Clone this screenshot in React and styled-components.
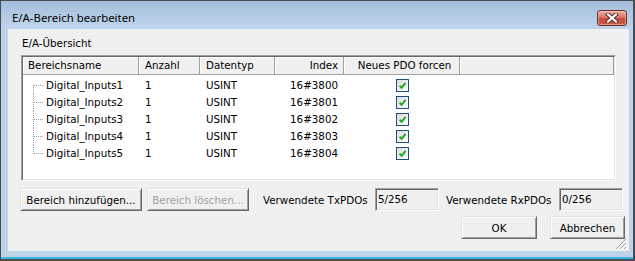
import React from "react";
import styled, { createGlobalStyle } from "styled-components";

const GlobalStyle = createGlobalStyle`
  html, body { margin: 0; padding: 0; background: #ffffff; }
  body { font-family: "DejaVu Sans", Tahoma, sans-serif; }
`;

const FONT = `"DejaVu Sans", Tahoma, sans-serif`;

const rows = [
  { name: "Digital_Inputs1", count: "1", type: "USINT", index: "16#3800" },
  { name: "Digital_Inputs2", count: "1", type: "USINT", index: "16#3801" },
  { name: "Digital_Inputs3", count: "1", type: "USINT", index: "16#3802" },
  { name: "Digital_Inputs4", count: "1", type: "USINT", index: "16#3803" },
  { name: "Digital_Inputs5", count: "1", type: "USINT", index: "16#3804" },
];

const CloseIcon = () => (
  <svg width="14" height="10" viewBox="0 0 14 10">
    <path d="M3 1.5 L11 8.5 M11 1.5 L3 8.5" stroke="#5a2424" strokeWidth="4" strokeLinecap="square" />
    <path d="M3 1.5 L11 8.5 M11 1.5 L3 8.5" stroke="#ffffff" strokeWidth="2.2" strokeLinecap="square" />
  </svg>
);

const CheckIcon = () => (
  <svg width="9" height="9" viewBox="0 0 9 9">
    <path d="M1.6 4.6 L3.6 6.8 L7.6 1.8" fill="none" stroke="#1ea51e" strokeWidth="1.9" />
  </svg>
);

const Grip = () => (
  <svg width="12" height="12" viewBox="0 0 12 12">
    <path d="M11 1 L1 11 M11 5 L5 11 M11 9 L9 11" stroke="#a0a0a0" strokeWidth="1" />
    <path d="M12 2 L2 12 M12 6 L6 12 M12 10 L10 12" stroke="#ffffff" strokeWidth="1" />
  </svg>
);

const App = () => {
  return (
    <>
      <GlobalStyle />
      <Window>
        <TitleBar>
          <Title>E/A-Bereich bearbeiten</Title>
          <CloseButton>
            <CloseIcon />
          </CloseButton>
        </TitleBar>
        <Frame>
          <Client>
            <GroupLabel>E/A-Übersicht</GroupLabel>
            <ListOuter>
              <ListInner>
                <HeaderRow>
                  <HeadCell $first>Bereichsname</HeadCell>
                  <HeadCell>Anzahl</HeadCell>
                  <HeadCell>Datentyp</HeadCell>
                  <HeadCell $align="right">Index</HeadCell>
                  <HeadCell $align="center">Neues PDO forcen</HeadCell>
                  <HeadCell />
                </HeaderRow>
                <Body>
                  {rows.map((r, i) => (
                    <Row key={r.name}>
                      <TreeCell $pos={i === 0 ? "first" : i === rows.length - 1 ? "last" : "mid"}>
                        {r.name}
                      </TreeCell>
                      <Cell>{r.count}</Cell>
                      <Cell>{r.type}</Cell>
                      <Cell $align="right">{r.index}</Cell>
                      <CheckCell>
                        <CheckBox>
                          <CheckIcon />
                        </CheckBox>
                      </CheckCell>
                      <Cell />
                    </Row>
                  ))}
                </Body>
              </ListInner>
            </ListOuter>

            <ActionRow>
              <Button $w={122}>Bereich hinzufügen...</Button>
              <Button $w={102} $ml={5} disabled>
                Bereich löschen...
              </Button>
              <FieldLabel $ml={14} $w={112}>Verwendete TxPDOs</FieldLabel>
              <ReadOnlyField>5/256</ReadOnlyField>
              <FieldLabel $ml={7} $w={113}>Verwendete RxPDOs</FieldLabel>
              <ReadOnlyField>0/256</ReadOnlyField>
            </ActionRow>

            <DialogButtons>
              <Button $w={76}>OK</Button>
              <Button $w={75} $ml={13}>Abbrechen</Button>
            </DialogButtons>

            <GripBox>
              <Grip />
            </GripBox>
          </Client>
        </Frame>
      </Window>
    </>
  );
};

export default App;

const Window = styled.div`
  width: 635px;
  height: 261px;
  box-sizing: border-box;
  border: 1px solid #474c53;
  border-right-width: 2px;
  border-bottom-width: 2px;
  background: #bcd3ea;
  display: flex;
  flex-direction: column;
`;

const TitleBar = styled.div`
  height: 28px;
  flex: none;
  display: flex;
  align-items: flex-start;
  justify-content: space-between;
  padding: 0 6px 0 11px;
  background: linear-gradient(#a4bedc, #c1d5ec);
`;

const Title = styled.div`
  margin-top: 8px;
  line-height: 17px;
  font-family: "Noto Sans", "Open Sans", sans-serif;
  font-size: 11.4px;
  color: #000;
`;

const CloseButton = styled.div`
  margin-top: 9px;
  width: 30px;
  height: 16px;
  box-sizing: border-box;
  border: 1px solid #6b2b2b;
  border-radius: 3px;
  background: linear-gradient(#e8ab9d 0%, #d7776a 45%, #c24a3b 55%, #c85d46 100%);
  box-shadow: inset 0 0 0 1px rgba(255, 220, 210, 0.45);
  display: flex;
  align-items: center;
  justify-content: center;
`;

const Frame = styled.div`
  flex: 1;
  display: flex;
  padding: 0 4px 6px 7px;
  border-bottom: 2px solid #3ab3d8;
`;

const Client = styled.div`
  flex: 1;
  position: relative;
  background: #f0f0f0;
  display: flex;
  flex-direction: column;
  padding: 8px 4px 0 12px;
  font-family: ${FONT};
  font-size: 10.3px;
  color: #000;
`;

const GroupLabel = styled.div`
  margin-left: 2px;
  height: 13px;
  line-height: 13px;
`;

const ListOuter = styled.div`
  margin: 5px 0 0 1px;
  width: 595px;
  height: 126px;
  box-sizing: border-box;
  border: 1px solid;
  border-color: #a0a0a0 #ffffff #ffffff #a0a0a0;
`;

const ListInner = styled.div`
  height: 100%;
  box-sizing: border-box;
  border: 1px solid;
  border-color: #696969 #e3e3e3 #e3e3e3 #696969;
  background: #ffffff;
  overflow: hidden;
`;

const columns = "116px 61px 75px 69px 116px 1fr";

const HeaderRow = styled.div`
  display: grid;
  grid-template-columns: ${columns};
  height: 18px;
`;

const HeadCell = styled.div`
  box-sizing: border-box;
  height: 18px;
  line-height: 17px;
  padding: 0 ${(p) => (p.$align === "right" ? 5 : 0)}px 0 ${(p) => (p.$first ? 5 : 6)}px;
  text-align: ${(p) => p.$align || "left"};
  background: #f0f0f0;
  border-right: 1px solid #a0a0a0;
  border-bottom: 1px solid #a0a0a0;
  box-shadow: inset 1px 1px #ffffff;
  white-space: nowrap;
  overflow: hidden;
`;

const Body = styled.div`
  padding-top: 2px;
`;

const Row = styled.div`
  display: grid;
  grid-template-columns: ${columns};
  height: 17px;
  line-height: 17px;
`;

const Cell = styled.div`
  padding: 0 ${(p) => (p.$align === "right" ? 6 : 0)}px 0 6px;
  text-align: ${(p) => p.$align || "left"};
  white-space: nowrap;
`;

const TreeCell = styled.div`
  position: relative;
  padding-left: 23px;
  white-space: nowrap;

  &::before {
    content: "";
    position: absolute;
    left: 10px;
    top: ${(p) => (p.$pos === "first" ? "8px" : "0")};
    height: ${(p) => (p.$pos === "mid" ? "17px" : p.$pos === "first" ? "9px" : "9px")};
    border-left: 1px dotted #a0a0a0;
  }

  &::after {
    content: "";
    position: absolute;
    left: 11px;
    top: 8px;
    width: 9px;
    border-top: 1px dotted #a0a0a0;
  }
`;

const CheckCell = styled.div`
  display: flex;
  align-items: center;
  justify-content: center;
`;

const CheckBox = styled.span`
  width: 13px;
  height: 13px;
  box-sizing: border-box;
  border: 1px solid #1c5180;
  background: linear-gradient(135deg, #dcdcdc, #ffffff);
  display: flex;
  align-items: center;
  justify-content: center;
`;

const ActionRow = styled.div`
  display: flex;
  align-items: center;
  height: 23px;
  margin-top: 7px;
`;

const DialogButtons = styled.div`
  display: flex;
  justify-content: flex-end;
  height: 23px;
  margin-top: 5px;
`;

const Button = styled.button`
  flex: none;
  width: ${(p) => p.$w}px;
  height: 23px;
  margin: 0 0 0 ${(p) => p.$ml || 0}px;
  padding: 0;
  box-sizing: border-box;
  font-family: ${FONT};
  font-size: 10.3px;
  color: ${(p) => (p.disabled ? "#a0a0a0" : "#000000")};
  background: #f0f0f0;
  border: 1px solid;
  border-color: #e3e3e3 #696969 #696969 #e3e3e3;
  box-shadow: inset 1px 1px #ffffff, inset -1px -1px #a0a0a0;
  white-space: nowrap;
`;

const FieldLabel = styled.div`
  flex: none;
  width: ${(p) => p.$w}px;
  margin-left: ${(p) => p.$ml}px;
  white-space: nowrap;
`;

const ReadOnlyField = styled.div`
  flex: none;
  width: 64px;
  height: 23px;
  box-sizing: border-box;
  border: 1px solid;
  border-color: #a0a0a0 #ffffff #ffffff #a0a0a0;
  box-shadow: inset 1px 1px #696969, inset -1px -1px #e3e3e3;
  padding: 0 2px;
  line-height: 21px;
  background: #f0f0f0;
`;

const GripBox = styled.div`
  position: absolute;
  right: 2px;
  bottom: 1px;
  width: 12px;
  height: 12px;
`;
